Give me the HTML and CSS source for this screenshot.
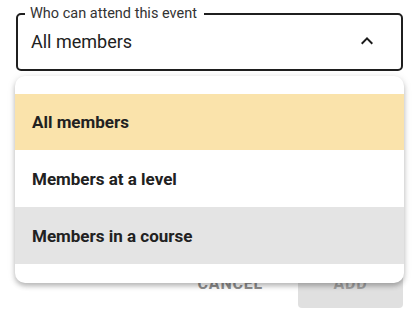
FILE: index.html
```html
<!DOCTYPE html>
<html>
<head>
<meta charset="utf-8">
<link rel="stylesheet" href="styles.css">
</head>
<body>
<div class="page">
  <fieldset class="field">
    <legend class="field-label">Who can attend this event</legend>
    <div class="field-row">
      <span class="field-value">All members</span>
      <svg class="chevron" viewBox="0 0 24 24" width="24" height="24"><path d="M12 8l-6 6 1.41 1.41L12 10.83l4.59 4.58L18 14z"/></svg>
    </div>
  </fieldset>
  <div class="actions">
    <button class="btn btn-text">CANCEL</button>
    <button class="btn btn-filled">ADD</button>
  </div>
  <div class="menu">
    <ul class="menu-list">
      <li class="menu-item selected">All members</li>
      <li class="menu-item">Members at a level</li>
      <li class="menu-item hovered">Members in a course</li>
    </ul>
  </div>
</div>
</body>
</html>
```
FILE: styles.css
```css
html, body {
  margin: 0;
  padding: 0;
  background: #fff;
}
body {
  font-family: Roboto, "Liberation Sans", Arial, sans-serif;
  color: #212121;
  width: 416px;
  height: 317px;
  overflow: hidden;
}
.page {
  position: relative;
  padding: 6px 13px 0 16px;
  height: 311px;
}
.field {
  margin: 0;
  border: 2px solid #1f1f1f;
  border-radius: 5px;
  padding: 0 22px 0 13px;
  box-sizing: border-box;
  height: 65px;
}
.field-label {
  font-size: 14.5px;
  line-height: 16px;
  padding: 0 7px 0 5px;
  margin-left: -6px;
  color: #333;
}
.field-row {
  display: flex;
  align-items: center;
  justify-content: space-between;
  height: 44px;
  margin-top: -3px;
}
.field-value {
  font-size: 18px;
  color: #212121;
}
.chevron {
  fill: #1a1a1a;
  display: block;
}
.actions {
  display: flex;
  justify-content: flex-end;
  gap: 19px;
  margin-top: 187px;
}
.btn {
  font-family: Roboto, "Liberation Sans", Arial, sans-serif;
  font-size: 16px;
  font-weight: 700;
  letter-spacing: 0.8px;
  border: none;
  border-radius: 4px;
  height: 50px;
  padding: 0;
}
.btn-text {
  background: transparent;
  color: #8f8f8f;
  padding: 0 16px;
}
.btn-filled {
  background: #e0e0e0;
  color: #a3a3a3;
  width: 105px;
}
.menu {
  position: absolute;
  left: 15px;
  top: 76px;
  width: 389px;
  height: 207px;
  background: #fff;
  border-radius: 10px;
  box-shadow: 0 3px 5px rgba(0,0,0,0.25), 0 1px 10px rgba(0,0,0,0.08);
  overflow: hidden;
}
.menu-list {
  list-style: none;
  margin: 18px 0 0;
  padding: 0;
}
.menu-item {
  height: 57px;
  display: flex;
  align-items: center;
  padding-left: 17px;
  font-size: 17px;
  font-weight: 700;
  color: #212121;
}
.menu-item.selected {
  background: #fae3ab;
  height: 56px;
}
.menu-item.hovered {
  background: #e4e4e4;
}
```
